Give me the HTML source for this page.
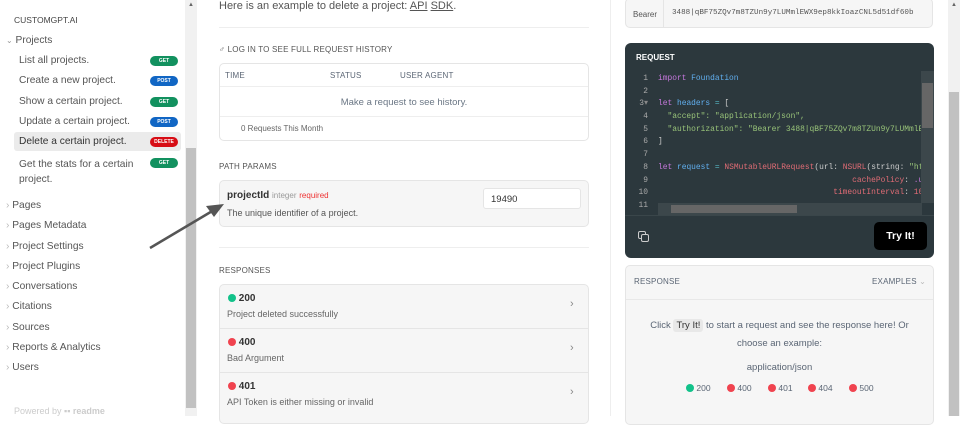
<!DOCTYPE html>
<html><head><meta charset="utf-8"><style>
*{box-sizing:border-box;margin:0;padding:0}
body{width:960px;height:416px;overflow:hidden;background:#fff;font-family:"Liberation Sans",sans-serif;position:relative;color:#4f5a66}
.a{position:absolute}
.side{left:0;top:0;width:185px;height:416px;background:#fff}
.sb{left:185px;top:0;width:12px;height:416px;background:#f1f1f1}
.thumb{left:186px;top:148px;width:10px;height:260px;background:#c1c1c1}
.nav{font-size:10.2px;color:#555}
.badge{position:absolute;left:150px;width:28px;height:10px;border-radius:5px;color:#fff;font-size:5px;font-weight:bold;text-align:center;line-height:10px}
.g{background:#12915f}.b{background:#1166c4}.r{background:#d70d15}
.mono{font-family:"Liberation Mono",monospace}
.box{border:1px solid #e5e5e5;border-radius:5px}
.cap{font-size:8px;color:#555;letter-spacing:.2px}
.dot{display:inline-block;width:8px;height:8px;border-radius:50%;vertical-align:-1px}
.code div{height:12.7px;white-space:pre}
.ln{color:#aaa;display:inline-block;width:23px;text-align:right;margin-right:10px}
</style></head><body>
<div class="a side">
<div class="a" style="left:14px;top:15px;font-size:8.5px;color:#444">CUSTOMGPT.AI</div>
<div class="a nav" style="left:6px;top:35px"><span style="font-size:8px;color:#999">⌄</span> Projects</div>
<div class="a nav" style="left:19px;top:55px">List all projects.</div><div class="badge g" style="top:56px">GET</div>
<div class="a nav" style="left:19px;top:75px">Create a new project.</div><div class="badge b" style="top:76px">POST</div>
<div class="a nav" style="left:19px;top:96px">Show a certain project.</div><div class="badge g" style="top:97px">GET</div>
<div class="a nav" style="left:19px;top:116px">Update a certain project.</div><div class="badge b" style="top:117px">POST</div>
<div class="a" style="left:14px;top:132px;width:167px;height:19px;background:#ebebeb;border-radius:3px"></div>
<div class="a nav" style="left:19px;top:136px;color:#333">Delete a certain project.</div><div class="badge r" style="top:137px">DELETE</div>
<div class="a nav" style="left:19px;top:157px;line-height:15px;width:120px">Get the stats for a certain project.</div><div class="badge g" style="top:158px">GET</div>
<div class="a nav" style="left:6px;top:196px;line-height:20.3px"><span style="color:#bbb">›</span> Pages<br><span style="color:#bbb">›</span> Pages Metadata<br><span style="color:#bbb">›</span> Project Settings<br><span style="color:#bbb">›</span> Project Plugins<br><span style="color:#bbb">›</span> Conversations<br><span style="color:#bbb">›</span> Citations<br><span style="color:#bbb">›</span> Sources<br><span style="color:#bbb">›</span> Reports &amp; Analytics<br><span style="color:#bbb">›</span> Users</div>
<div class="a" style="left:14px;top:406px;font-size:9px;color:#ccc">Powered by <b style="color:#ccc">▪▪ readme</b></div>
</div>
<div class="a sb"></div><div class="a thumb"></div>
<div class="a" style="left:188px;top:2px;font-size:6px;color:#666">▲</div>

<div class="a" style="left:219px;top:0px;font-size:11px;color:#555">Here is an example to delete a project: <u>API</u> <u>SDK</u>.</div>
<div class="a" style="left:219px;top:27px;width:370px;height:1px;background:#eee"></div>
<div class="a cap" style="left:219px;top:45px">♂ LOG IN TO SEE FULL REQUEST HISTORY</div>
<div class="a box" style="left:219px;top:63px;width:370px;height:78px">
<div class="a cap" style="left:5px;top:7px;color:#5b6675">TIME</div>
<div class="a cap" style="left:110px;top:7px;color:#5b6675">STATUS</div>
<div class="a cap" style="left:180px;top:7px;color:#5b6675">USER AGENT</div>
<div class="a" style="left:0;top:22px;width:368px;height:1px;background:#eee"></div>
<div class="a" style="left:0;top:33px;width:368px;text-align:center;font-size:9.5px;color:#6b7785">Make a request to see history.</div>
<div class="a" style="left:0;top:52px;width:368px;height:1px;background:#eee"></div>
<div class="a" style="left:21px;top:60px;font-size:8px;color:#666">0 Requests This Month</div>
</div>
<div class="a cap" style="left:219px;top:162px">PATH PARAMS</div>
<div class="a box" style="left:219px;top:180px;width:370px;height:47px;background:#f6f6f6">
<div class="a" style="left:7px;top:9px;font-size:10px;color:#333"><b>projectId</b> <span style="font-size:8px;color:#999">integer</span> <span style="font-size:8px;color:#e33">required</span></div>
<div class="a" style="left:7px;top:27px;font-size:9px;color:#555">The unique identifier of a project.</div>
<div class="a" style="left:263px;top:7px;width:98px;height:21px;background:#fff;border:1px solid #e5e5e5;border-radius:3px;font-size:9.5px;color:#333;padding:5px 7px">19490</div>
</div>
<div class="a" style="left:219px;top:247px;width:370px;height:1px;background:#eee"></div>
<div class="a cap" style="left:219px;top:266px">RESPONSES</div>
<div class="a box" style="left:219px;top:284px;width:370px;height:140px;background:#f6f6f6">
<div class="a" style="left:8px;top:8px;font-size:10px;color:#333;font-weight:bold"><span class="dot" style="background:#12c28a"></span> 200</div>
<div class="a" style="left:7px;top:24px;font-size:9px;color:#666">Project deleted successfully</div>
<div class="a" style="left:350px;top:13px;color:#888;font-size:11px">›</div>
<div class="a" style="left:0;top:43px;width:368px;height:1px;background:#e5e5e5"></div>
<div class="a" style="left:8px;top:52px;font-size:10px;color:#333;font-weight:bold"><span class="dot" style="background:#f0434f"></span> 400</div>
<div class="a" style="left:7px;top:68px;font-size:9px;color:#666">Bad Argument</div>
<div class="a" style="left:350px;top:57px;color:#888;font-size:11px">›</div>
<div class="a" style="left:0;top:87px;width:368px;height:1px;background:#e5e5e5"></div>
<div class="a" style="left:8px;top:96px;font-size:10px;color:#333;font-weight:bold"><span class="dot" style="background:#f0434f"></span> 401</div>
<div class="a" style="left:7px;top:112px;font-size:9px;color:#666">API Token is either missing or invalid</div>
<div class="a" style="left:350px;top:101px;color:#888;font-size:11px">›</div>
</div>

<div class="a" style="left:610px;top:0;width:1px;height:416px;background:#eee"></div>
<div class="a box" style="left:625px;top:-2px;width:308px;height:30px;background:#f6f6f6">
<div class="a" style="left:0;top:0;width:38px;height:28px;border-right:1px solid #e5e5e5;font-size:8px;color:#555;padding:11px 7px">Bearer</div>
<div class="a mono" style="left:46px;top:10px;font-size:7.6px;color:#555">3488|qBF75ZQv7m8TZUn9y7LUMmlEWX9ep8kkIoazCNL5d51df60b</div>
</div>
<div class="a" style="left:625px;top:43px;width:309px;height:215px;background:#2c383d;border-radius:6px;overflow:hidden">
<div class="a" style="left:11px;top:10px;font-size:8px;color:#fff;font-weight:bold">REQUEST</div>
<div class="a mono code" style="left:0;top:30px;font-size:7.9px;width:296px;overflow:hidden;line-height:12.7px">
<div><span class="ln">1</span><span style="color:#c678dd">import</span> <span style="color:#61afef">Foundation</span></div>
<div><span class="ln">2</span></div>
<div><span class="ln">3<span style="color:#888">▾</span></span><span style="color:#c678dd">let</span> <span style="color:#61afef">headers</span> <span style="color:#56b6c2">=</span> <span style="color:#ccc">[</span></div>
<div><span class="ln">4</span>  <span style="color:#98c379">"accept": "application/json",</span></div>
<div><span class="ln">5</span>  <span style="color:#98c379">"authorization": "Bearer 3488|qBF75ZQv7m8TZUn9y7LUMmlEW</span></div>
<div><span class="ln">6</span><span style="color:#ccc">]</span></div>
<div><span class="ln">7</span></div>
<div><span class="ln">8</span><span style="color:#c678dd">let</span> <span style="color:#61afef">request</span> <span style="color:#56b6c2">=</span> <span style="color:#e06c75">NSMutableURLRequest</span><span style="color:#ccc">(url:</span> <span style="color:#e06c75">NSURL</span><span style="color:#ccc">(string:</span> <span style="color:#98c379">"htt</span></div>
<div><span class="ln">9</span>                                         <span style="color:#e06c75">cachePolicy</span><span style="color:#ccc">:</span> <span style="color:#c678dd">.use</span></div>
<div><span class="ln">10</span>                                     <span style="color:#e06c75">timeoutInterval</span><span style="color:#ccc">:</span> <span style="color:#e06c75">10.0</span></div>
<div><span class="ln">11</span></div>
</div>
<div class="a" style="left:33px;top:160px;width:264px;height:12px;background:#3c474b"></div>
<div class="a" style="left:46px;top:162px;width:126px;height:8px;background:#666"></div>
<div class="a" style="left:296px;top:28px;width:13px;height:132px;background:#3c474b"></div>
<div class="a" style="left:297px;top:40px;width:11px;height:45px;background:#666"></div>
<div class="a" style="left:0;top:172px;width:309px;height:1px;background:#3a464a"></div>
<div class="a" style="left:13px;top:188px;width:8px;height:8px;border:1.3px solid #ccc;border-radius:2px"></div>
<div class="a" style="left:16px;top:191px;width:8px;height:8px;border:1.3px solid #ccc;border-radius:2px;background:#2c383d"></div>
<div class="a" style="left:249px;top:179px;width:53px;height:28px;background:#000;border-radius:5px;color:#fff;font-size:10.5px;font-weight:bold;text-align:center;line-height:28px">Try It!</div>
</div>
<div class="a box" style="left:625px;top:265px;width:309px;height:160px;background:#f6f6f6">
<div class="a cap" style="left:8px;top:11px;color:#5b6675">RESPONSE</div>
<div class="a cap" style="left:246px;top:11px;color:#5b6675">EXAMPLES <span style="color:#bbb">⌄</span></div>
<div class="a" style="left:0;top:33px;width:307px;height:1px;background:#e8e8e8"></div>
<div class="a" style="left:0;top:51px;width:307px;text-align:center;font-size:9.5px;color:#5b6675;line-height:18px">Click <span style="background:#e8e8e8;border-radius:3px;padding:1px 3px;color:#333">Try It!</span> to start a request and see the response here! Or<br>choose an example:</div>
<div class="a" style="left:0;top:96px;width:307px;text-align:center;font-size:9.5px;color:#5b6675">application/json</div>
<div class="a" style="left:60px;top:117px;font-size:8.5px;color:#5b6675"><span class="dot" style="background:#12c28a"></span> 200</div>
<div class="a" style="left:101px;top:117px;font-size:8.5px;color:#5b6675"><span class="dot" style="background:#f0434f"></span> 400</div>
<div class="a" style="left:142px;top:117px;font-size:8.5px;color:#5b6675"><span class="dot" style="background:#f0434f"></span> 401</div>
<div class="a" style="left:182px;top:117px;font-size:8.5px;color:#5b6675"><span class="dot" style="background:#f0434f"></span> 404</div>
<div class="a" style="left:223px;top:117px;font-size:8.5px;color:#5b6675"><span class="dot" style="background:#f0434f"></span> 500</div>
</div>
<div class="a" style="left:948px;top:0;width:12px;height:416px;background:#f1f1f1"></div>
<div class="a" style="left:949px;top:92px;width:10px;height:324px;background:#c1c1c1"></div>
<div class="a" style="left:951px;top:2px;font-size:6px;color:#666">▲</div>
<svg class="a" style="left:0;top:0" width="960" height="416"><line x1="150" y1="248" x2="214" y2="210" stroke="#555" stroke-width="2.5"/><polygon points="224,204 206,206 214,217" fill="#555"/></svg>
</body></html>
